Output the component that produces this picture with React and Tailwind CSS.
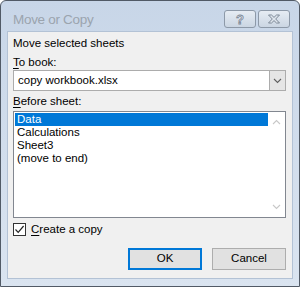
import React, { useState } from 'react';

const sheets = ['Data', 'Calculations', 'Sheet3', '(move to end)'];

const TitleButton = ({ children }) => (
  <div className="w-[32px] h-[18px] rounded-[3px] border border-[#8d99a8] bg-gradient-to-b from-[#e6ecf3] to-[#cbd6e3] flex items-center justify-center">
    {children}
  </div>
);

export default function App() {
  const [selected, setSelected] = useState(0);
  const [copy, setCopy] = useState(true);

  return (
    <div
      className="w-[300px] h-[287px] rounded-t-[6px] border border-[#515a66] bg-gradient-to-b from-[#c8d6e8] to-[#dae4f0] flex flex-col text-[11.5px] text-black"
      style={{ fontFamily: '"Liberation Sans", Arial, sans-serif' }}
    >
      {/* Title bar */}
      <div className="h-[30px] flex items-start pl-[12px] pr-[9px]">
        <div className="mt-[11px] text-[13.5px] leading-[15px] tracking-[-0.3px] text-[#9ba4ae] flex-1">Move or Copy</div>
        <div className="mt-[9px] flex gap-[2px]">
          <TitleButton>
            <span className="text-[13px] font-bold leading-none text-[#dde4ec]" style={{ WebkitTextStroke: '0.8px #7d8896' }}>?</span>
          </TitleButton>
          <TitleButton>
            <svg width="14" height="10" viewBox="0 0 14 10">
              <path d="M1.5 1 L4.5 1 L7 3.4 L9.5 1 L12.5 1 L8.7 5 L12.5 9 L9.5 9 L7 6.6 L4.5 9 L1.5 9 L5.3 5 Z" fill="#dfe6ee" stroke="#7d8896" strokeWidth="1" strokeLinejoin="round" />
            </svg>
          </TitleButton>
        </div>
      </div>

      {/* Client area */}
      <div className="mx-[6px] h-[248px] border border-[#b3c2d5] bg-[#f0f0f0] pl-[5px] pr-[6px] pt-[4px] flex flex-col">
        <div className="leading-[15px]">Move selected sheets</div>
        <div className="mt-[4px] leading-[15px]"><span className="underline underline-offset-2">T</span>o book:</div>
        <div className="h-[21px] border border-[#acacac] bg-white flex items-center">
          <span className="flex-1 pl-[4px] leading-[15px]">copy workbook.xlsx</span>
          <div className="w-[17px] h-[21px] -mr-px border border-[#acacac] bg-[#e5e5e5] flex items-center justify-center">
            <svg width="9" height="6" viewBox="0 0 9 6">
              <path d="M1 1 L4.5 4.5 L8 1" fill="none" stroke="#606060" strokeWidth="1.1" />
            </svg>
          </div>
        </div>
        <div className="mt-[3px] leading-[15px]"><span className="underline underline-offset-2">B</span>efore sheet:</div>
        <div className="mt-[2px] h-[107px] border border-[#828790] bg-white flex">
          <div className="flex-1 pt-[1px] pl-[1px]">
            {sheets.map((s, i) => (
              <div
                key={s}
                onClick={() => setSelected(i)}
                className={`h-[13px] leading-[13px] pl-[2px] ${i === selected ? 'bg-[#0078d7] text-white' : ''}`}
              >
                {s}
              </div>
            ))}
          </div>
          <div className="w-[17px] flex flex-col justify-between items-center py-[7px]">
            <svg width="9" height="6" viewBox="0 0 9 6">
              <path d="M1 5 L4.5 1.5 L8 5" fill="none" stroke="#c8c8c8" strokeWidth="1.1" />
            </svg>
            <svg width="9" height="6" viewBox="0 0 9 6">
              <path d="M1 1 L4.5 4.5 L8 1" fill="none" stroke="#c8c8c8" strokeWidth="1.1" />
            </svg>
          </div>
        </div>
        <label className="mt-[5px] flex items-center gap-[5px] h-[13px] cursor-pointer" onClick={() => setCopy(!copy)}>
          <div className="w-[13px] h-[13px] border border-[#333333] bg-white flex items-center justify-center">
            {copy && (
              <svg width="11" height="11" viewBox="0 0 11 11">
                <path d="M1.5 5.5 L4.2 8.3 L9.6 2" fill="none" stroke="#222" strokeWidth="1.2" />
              </svg>
            )}
          </div>
          <span className="leading-[15px]"><span className="underline underline-offset-2">C</span>reate a copy</span>
        </label>
        <div className="mt-[12px] flex justify-end gap-[10px]">
          <button className="w-[74px] h-[22px] border-2 border-[#0078d7] bg-[#e1e1e1] leading-none">OK</button>
          <button className="w-[74px] h-[22px] border border-[#adadad] bg-[#e1e1e1] leading-none">Cancel</button>
        </div>
      </div>
    </div>
  );
}
